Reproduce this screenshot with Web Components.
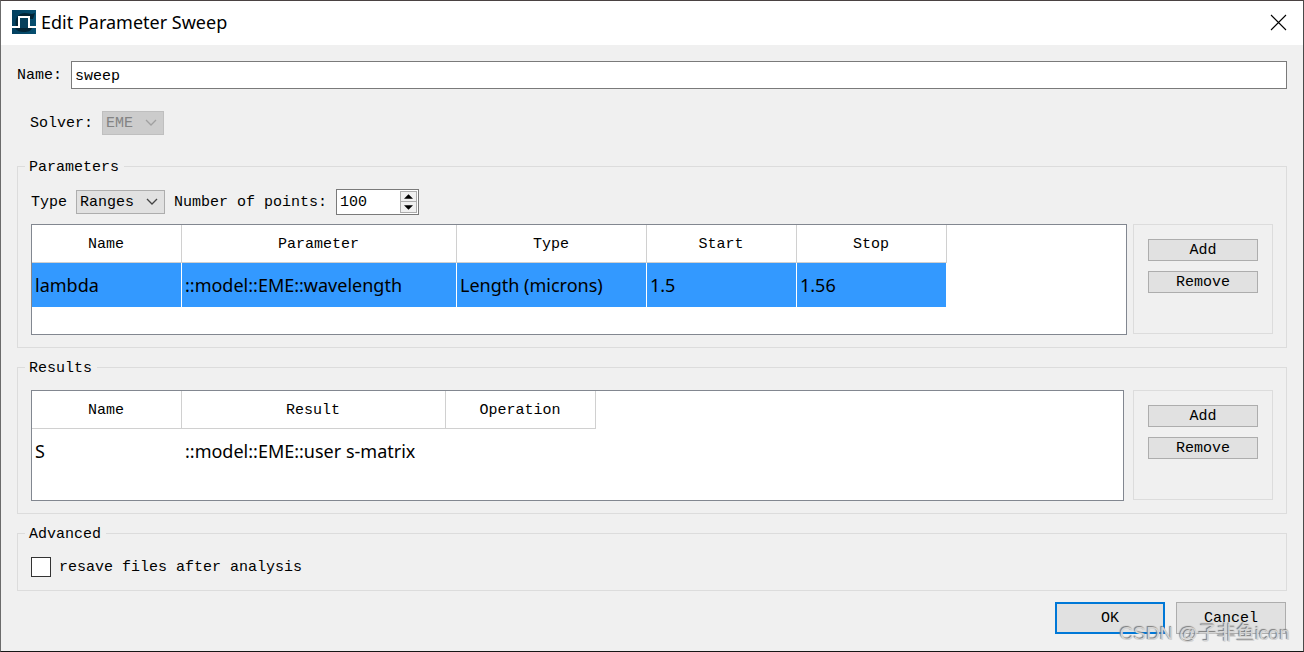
<!DOCTYPE html>
<html lang="en">
<head>
<meta charset="utf-8">
<title>Edit Parameter Sweep</title>
<style>
  body {
    margin: 0;
    font: 15px/20px "Liberation Mono", "Noto Sans CJK SC", monospace;
    color: #000;
    --ui-font: "Noto Sans", "Noto Sans CJK SC", sans-serif;
    --face: #f0f0f0;
    --button: #e1e1e1;
    --edge: #adadad;
    --field-edge: #7a7a7a;
    --group-edge: #dcdcdc;
  }
</style>
</head>
<body>
<sweep-dialog></sweep-dialog>
<script>
const define = (name, html, setup) => {
  const template = document.createElement('template');
  template.innerHTML = '<style>*{box-sizing:border-box}:host([hidden]){display:none}label{padding-top:2px}</style>' + html;
  customElements.define(name, class extends HTMLElement {
    constructor() {
      super();
      this.attachShadow({ mode: 'open' }).append(template.content.cloneNode(true));
    }
    connectedCallback() {
      if (setup && !this.ready) { this.ready = true; setup(this, this.shadowRoot); }
    }
  });
};

define('title-bar', `
  <style>
    :host { display: flex; align-items: center; box-sizing: border-box; height: 44px; padding: 0 16px 2px 11px; background: #fff; }
    h1 { flex: 1; margin: 0 0 0 5px; font: 18px/24px var(--ui-font); }
    button { display: flex; padding: 0; border: 0; background: none; }
    svg { display: block; }
  </style>
  <svg width="24" height="24" viewBox="0 0 24 24" aria-hidden="true">
    <defs><linearGradient id="g" x1="0" y1="0" x2="1" y2="0"><stop offset="0" stop-color="#03405f"/><stop offset="1" stop-color="#064f70"/></linearGradient></defs>
    <path fill="url(#g)" d="M0 0h24v24H0z"/>
    <path fill="#022435" d="M4 16C2 9 6 3 13 3c3 0 5 1 7 1l3-1-2 6-3 0v-2H7v9zM3 18h17c-1 3-4 4-8 4-4 0-7-1-9-4z"/>
    <path fill="#06405c" d="M8 8h8v10H8z"/>
    <path fill="none" stroke="#fff" stroke-width="2" d="M0 17h7V7h10v10h7"/>
  </svg>
  <h1><slot></slot></h1>
  <button type="button" aria-label="Close">
    <svg width="17" height="17" viewBox="0 0 17 17"><path d="M1 1l15 15M16 1L1 16" stroke="#000" stroke-width="1.1"/></svg>
  </button>`);

define('text-field', `
  <style>
    :host { display: flex; align-items: center; gap: 9px; }
    input { flex: 1; min-width: 0; height: 28px; padding: 2px 3px 0; border: 1px solid var(--field-edge); border-radius: 0; background: #fff; font: inherit; color: inherit; }
  </style>
  <label for="f"></label><input id="f" type="text">`,
  (el, root) => {
    root.querySelector('label').textContent = el.getAttribute('label');
    root.querySelector('input').value = el.getAttribute('value');
  });

define('drop-down', `
  <style>
    :host { display: inline-flex; align-items: center; gap: 9px; }
    span { display: grid; align-items: center; }
    select, svg { grid-area: 1 / 1; }
    select { appearance: none; height: 24px; margin: 0; padding: 2px 29px 0 3px; border: 1px solid var(--edge); border-radius: 0; background: var(--button); font: inherit; color: inherit; opacity: 1; }
    select:disabled { background: #ccc; border-color: #bfbfbf; color: #838383; }
    svg { justify-self: end; margin-right: 7px; stroke: #444; pointer-events: none; }
    select:disabled + svg { stroke: #a0a0a0; }
  </style>
  <label for="s"></label>
  <span><select id="s"></select><svg width="12" height="8" viewBox="0 0 12 8" fill="none" stroke-width="1.3"><path d="M1 1l5 5 5-5"/></svg></span>`,
  (el, root) => {
    root.querySelector('label').textContent = el.getAttribute('label');
    const select = root.querySelector('select');
    select.add(new Option(el.getAttribute('value')));
    select.disabled = el.hasAttribute('disabled');
  });

define('spin-box', `
  <style>
    :host { display: inline-flex; align-items: center; gap: 9px; }
    .box { display: flex; width: 83px; height: 26px; padding: 1px; border: 1px solid var(--field-edge); background: #fff; }
    input { appearance: textfield; flex: 1; min-width: 0; margin: 0; padding: 2px 2px 0; border: 0; background: none; font: inherit; color: inherit; outline: 0; }
    input::-webkit-inner-spin-button { appearance: none; display: none; }
    .steps { display: grid; grid-template-rows: 1fr 1fr; width: 17px; }
    button { display: grid; place-items: center; min-height: 0; margin: 0; padding: 0; border: 1px solid var(--edge); background: #f0f0f0; }
    button + button { border-top: 0; }
    svg { display: block; }
  </style>
  <label for="n"></label>
  <div class="box">
    <input id="n" type="number">
    <div class="steps">
      <button type="button" aria-label="Increase"><svg width="9" height="5" viewBox="0 0 10 5"><path d="M0 5L5 0l5 5z"/></svg></button>
      <button type="button" aria-label="Decrease"><svg width="9" height="5" viewBox="0 0 10 5"><path d="M0 0l5 5 5-5z"/></svg></button>
    </div>
  </div>`,
  (el, root) => {
    const input = root.querySelector('input');
    const [up, down] = root.querySelectorAll('button');
    root.querySelector('label').textContent = el.getAttribute('label');
    input.value = el.getAttribute('value');
    up.onclick = () => input.stepUp();
    down.onclick = () => input.stepDown();
  });

define('group-box', `
  <style>
    :host { display: block; }
    fieldset { min-width: 0; margin: 0; padding: 13px 13px 12px 7px; border: 1px solid var(--group-edge); }
    legend { height: 19px; padding: 0 5px 0 4px; line-height: 21px; }
    .content { padding-left: 6px; }
  </style>
  <fieldset><legend></legend><div class="content"><slot></slot></div></fieldset>`,
  (el, root) => { root.querySelector('legend').textContent = el.getAttribute('label'); });

define('push-button', `
  <style>
    :host { display: block; width: 110px; }
    button { display: block; width: 100%; height: 22px; margin: 0; padding: 2px 0 0; border: 1px solid var(--edge); border-radius: 0; background: var(--button); font: inherit; line-height: 18px; color: inherit; }
    :host([large]) button { height: 32px; }
    :host([primary]) button { border: 2px solid #0078d7; }
  </style>
  <button type="button"><slot></slot></button>`);

define('button-panel', `
  <style>
    :host { display: flex; flex-direction: column; gap: 10px; width: 140px; height: 110px; box-sizing: border-box; padding: 14px; border: 1px solid var(--group-edge); }
  </style>
  <push-button>Add</push-button><push-button>Remove</push-button>`);

define('data-grid', `
  <style>
    :host { display: block; box-sizing: border-box; flex: 1; min-width: 0; height: 111px; overflow: hidden; border: 1px solid #828790; background: #fff; }
    table { table-layout: fixed; width: 0; border-collapse: separate; border-spacing: 0; }
    th { height: 38px; padding: 2px 1px 0 0; border: 0 solid #d0d0d0; border-width: 0 1px 1px 0; font-weight: normal; text-align: center; }
    td { height: 44px; padding: 0 3px; border-right: 1px solid #fff; font: 18px/24px var(--ui-font); white-space: nowrap; }
    :host([selected]) td { background: #3399ff; }
  </style>
  <table><colgroup></colgroup><thead><tr></tr></thead><tbody><tr></tr></tbody></table>`,
  (el, root) => {
    const split = name => el.getAttribute(name).split('|');
    const fill = (parent, tag, items, apply) => items.forEach(item => {
      const node = document.createElement(tag);
      apply(node, item);
      root.querySelector(parent).append(node);
    });
    fill('colgroup', 'col', split('widths'), (n, v) => { n.style.width = v + 'px'; });
    fill('thead tr', 'th', split('heads'), (n, v) => { n.scope = 'col'; n.textContent = v; });
    fill('tbody tr', 'td', split('cells'), (n, v) => { n.textContent = v; });
  });

define('check-box', `
  <style>
    :host { display: block; }
    label { display: flex; align-items: center; gap: 8px; height: 22px; padding: 0; }
    span { padding-top: 2px; }
    input { appearance: none; width: 20px; height: 20px; margin: 0; border: 1px solid #333; background: #fff; }
    input:checked { box-shadow: inset 0 0 0 4px #fff; background: #333; }
  </style>
  <label><input type="checkbox"><span><slot></slot></span></label>`);

define('sweep-dialog', `
  <style>
    :host { display: block; box-sizing: border-box; position: relative; min-height: 100vh; border: 1px solid; border-color: #4a4242 #4a4a4a #161616 #6b6b6b; background: var(--face); }
    main { padding: 16px 16px 17px; }
    .solver { display: flex; padding: 22px 13px; }
    .options { display: flex; align-items: center; gap: 9px; margin-bottom: 9px; }
    .data { display: flex; gap: 6px; }
    .data.wide { gap: 9px; }
    group-box + group-box { margin-top: 10px; }
    footer { display: flex; justify-content: flex-end; gap: 11px; margin-top: 11px; padding-right: 1px; }
    .mark { position: absolute; right: 13px; bottom: 4px; font: 19px/26px "Liberation Sans", "Noto Sans CJK SC", sans-serif; color: #d4d4d4; text-shadow: -1px -1px 1px #777; white-space: nowrap; pointer-events: none; }
  </style>
  <title-bar>Edit Parameter Sweep</title-bar>
  <main>
    <text-field label="Name:" value="sweep"></text-field>
    <div class="solver"><drop-down label="Solver:" value="EME" disabled></drop-down></div>
    <group-box label="Parameters">
      <div class="options">
        <drop-down label="Type" value="Ranges"></drop-down>
        <spin-box label="Number of points:" value="100"></spin-box>
      </div>
      <div class="data">
        <data-grid selected widths="150|275|190|150|150" heads="Name|Parameter|Type|Start|Stop" cells="lambda|::model::EME::wavelength|Length (microns)|1.5|1.56"></data-grid>
        <button-panel></button-panel>
      </div>
    </group-box>
    <group-box label="Results">
      <div class="data wide">
        <data-grid widths="150|264|150" heads="Name|Result|Operation" cells="S|::model::EME::user s-matrix|"></data-grid>
        <button-panel></button-panel>
      </div>
    </group-box>
    <group-box label="Advanced"><check-box>resave files after analysis</check-box></group-box>
    <footer>
      <push-button large primary>OK</push-button>
      <push-button large>Cancel</push-button>
    </footer>
  </main>
  <div class="mark">CSDN @子非鱼icon</div>`);
</script>
</body>
</html>
